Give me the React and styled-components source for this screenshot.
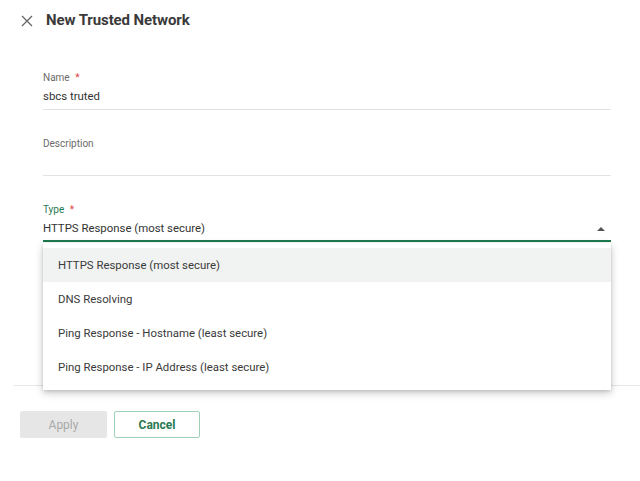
import React from 'react';
import styled, { createGlobalStyle } from 'styled-components';

const GlobalStyle = createGlobalStyle`
  body {
    margin: 0;
    background: #fff;
    font-family: Roboto, "Liberation Sans", Arial, sans-serif;
    color: #333;
  }
`;

const options = [
  'HTTPS Response (most secure)',
  'DNS Resolving',
  'Ping Response - Hostname (least secure)',
  'Ping Response - IP Address (least secure)',
];

const App = () => {
  return (
    <Page>
      <GlobalStyle />
      <Header>
        <CloseButton aria-label='close'>
          <svg width='12' height='12' viewBox='0 0 12 12'>
            <path d='M1 1 L11 11 M11 1 L1 11' stroke='#666' strokeWidth='1.3' fill='none' />
          </svg>
        </CloseButton>
        <Title>New Trusted Network</Title>
      </Header>
      <Form>
        <Field>
          <Label>
            Name <Required>*</Required>
          </Label>
          <Value>sbcs truted</Value>
        </Field>
        <Field>
          <Label>Description</Label>
          <Value />
        </Field>
        <SelectField>
          <Field $focused>
            <Label $focused>
              Type <Required>*</Required>
            </Label>
            <Value>HTTPS Response (most secure)</Value>
            <Caret />
          </Field>
          <Menu>
            {options.map((o, i) => (
              <MenuItem key={o} $active={i === 0}>
                {o}
              </MenuItem>
            ))}
          </Menu>
        </SelectField>
      </Form>
      <Divider />
      <Actions>
        <Button disabled>Apply</Button>
        <Button $outline>Cancel</Button>
      </Actions>
    </Page>
  );
};

const Page = styled.div`
  width: 640px;
  height: 481px;
  position: relative;
`;

const Header = styled.div`
  display: flex;
  align-items: center;
  gap: 13px;
  padding: 10px 20px 0 21px;
  height: 20px;
`;

const CloseButton = styled.span`
  display: flex;
  width: 12px;
  height: 12px;
  margin-top: 1px;
`;

const Title = styled.h1`
  margin: 0;
  font-size: 15px;
  font-weight: 700;
  color: #3a3a3a;
  letter-spacing: -0.1px;
`;

const Form = styled.div`
  padding: 41px 29px 0 43px;
  display: flex;
  flex-direction: column;
  gap: 27px;
`;

const Field = styled.div`
  position: relative;
  border-bottom: ${(p) => (p.$focused ? '2px solid #1d7a50' : '1px solid #e2e2e2')};
  padding-bottom: ${(p) => (p.$focused ? '2px' : '3px')};
`;

const Label = styled.div`
  font-size: 10px;
  line-height: 14px;
  height: 14px;
  margin-bottom: 1px;
  color: ${(p) => (p.$focused ? '#1f7a4f' : '#6b6b6b')};
`;

const Required = styled.span`
  color: #e0443c;
  margin-left: 3px;
`;

const Value = styled.div`
  font-size: 11.4px;
  line-height: 20px;
  height: 20px;
  color: #333;
`;

const Caret = styled.span`
  position: absolute;
  right: 6px;
  bottom: 9px;
  width: 0;
  height: 0;
  border-left: 4px solid transparent;
  border-right: 4px solid transparent;
  border-bottom: 4px solid #555;
`;

const SelectField = styled.div`
  position: relative;
`;

const Menu = styled.div`
  position: absolute;
  top: 40px;
  left: 0;
  right: 0;
  z-index: 2;
  background: #fff;
  padding: 5px 0 6px;
  box-shadow: 0 3px 8px rgba(0, 0, 0, 0.22), 0 1px 3px rgba(0, 0, 0, 0.12);
`;

const MenuItem = styled.div`
  height: 34px;
  display: flex;
  align-items: center;
  padding-left: 15px;
  font-size: 11.4px;
  color: #3a3a3a;
  background: ${(p) => (p.$active ? '#f0f3f2' : '#fff')};
`;

const Divider = styled.div`
  margin: 143px 0 0 14px;
  height: 1px;
  background: #e6e6e6;
`;

const Actions = styled.div`
  display: flex;
  gap: 7px;
  padding: 25px 0 0 20px;
`;

const Button = styled.button`
  width: ${(p) => (p.$outline ? '86px' : '87px')};
  height: 27px;
  border-radius: 2px;
  font-family: Roboto, "Liberation Sans", Arial, sans-serif;
  font-size: 12px;
  font-weight: ${(p) => (p.$outline ? 700 : 400)};
  color: ${(p) => (p.$outline ? '#2b7a52' : '#a9a9a9')};
  background: ${(p) => (p.$outline ? '#fff' : '#e6e6e6')};
  border: 1px solid ${(p) => (p.$outline ? '#9fd1b8' : '#e6e6e6')};
  padding: 0;
`;

export default App;
